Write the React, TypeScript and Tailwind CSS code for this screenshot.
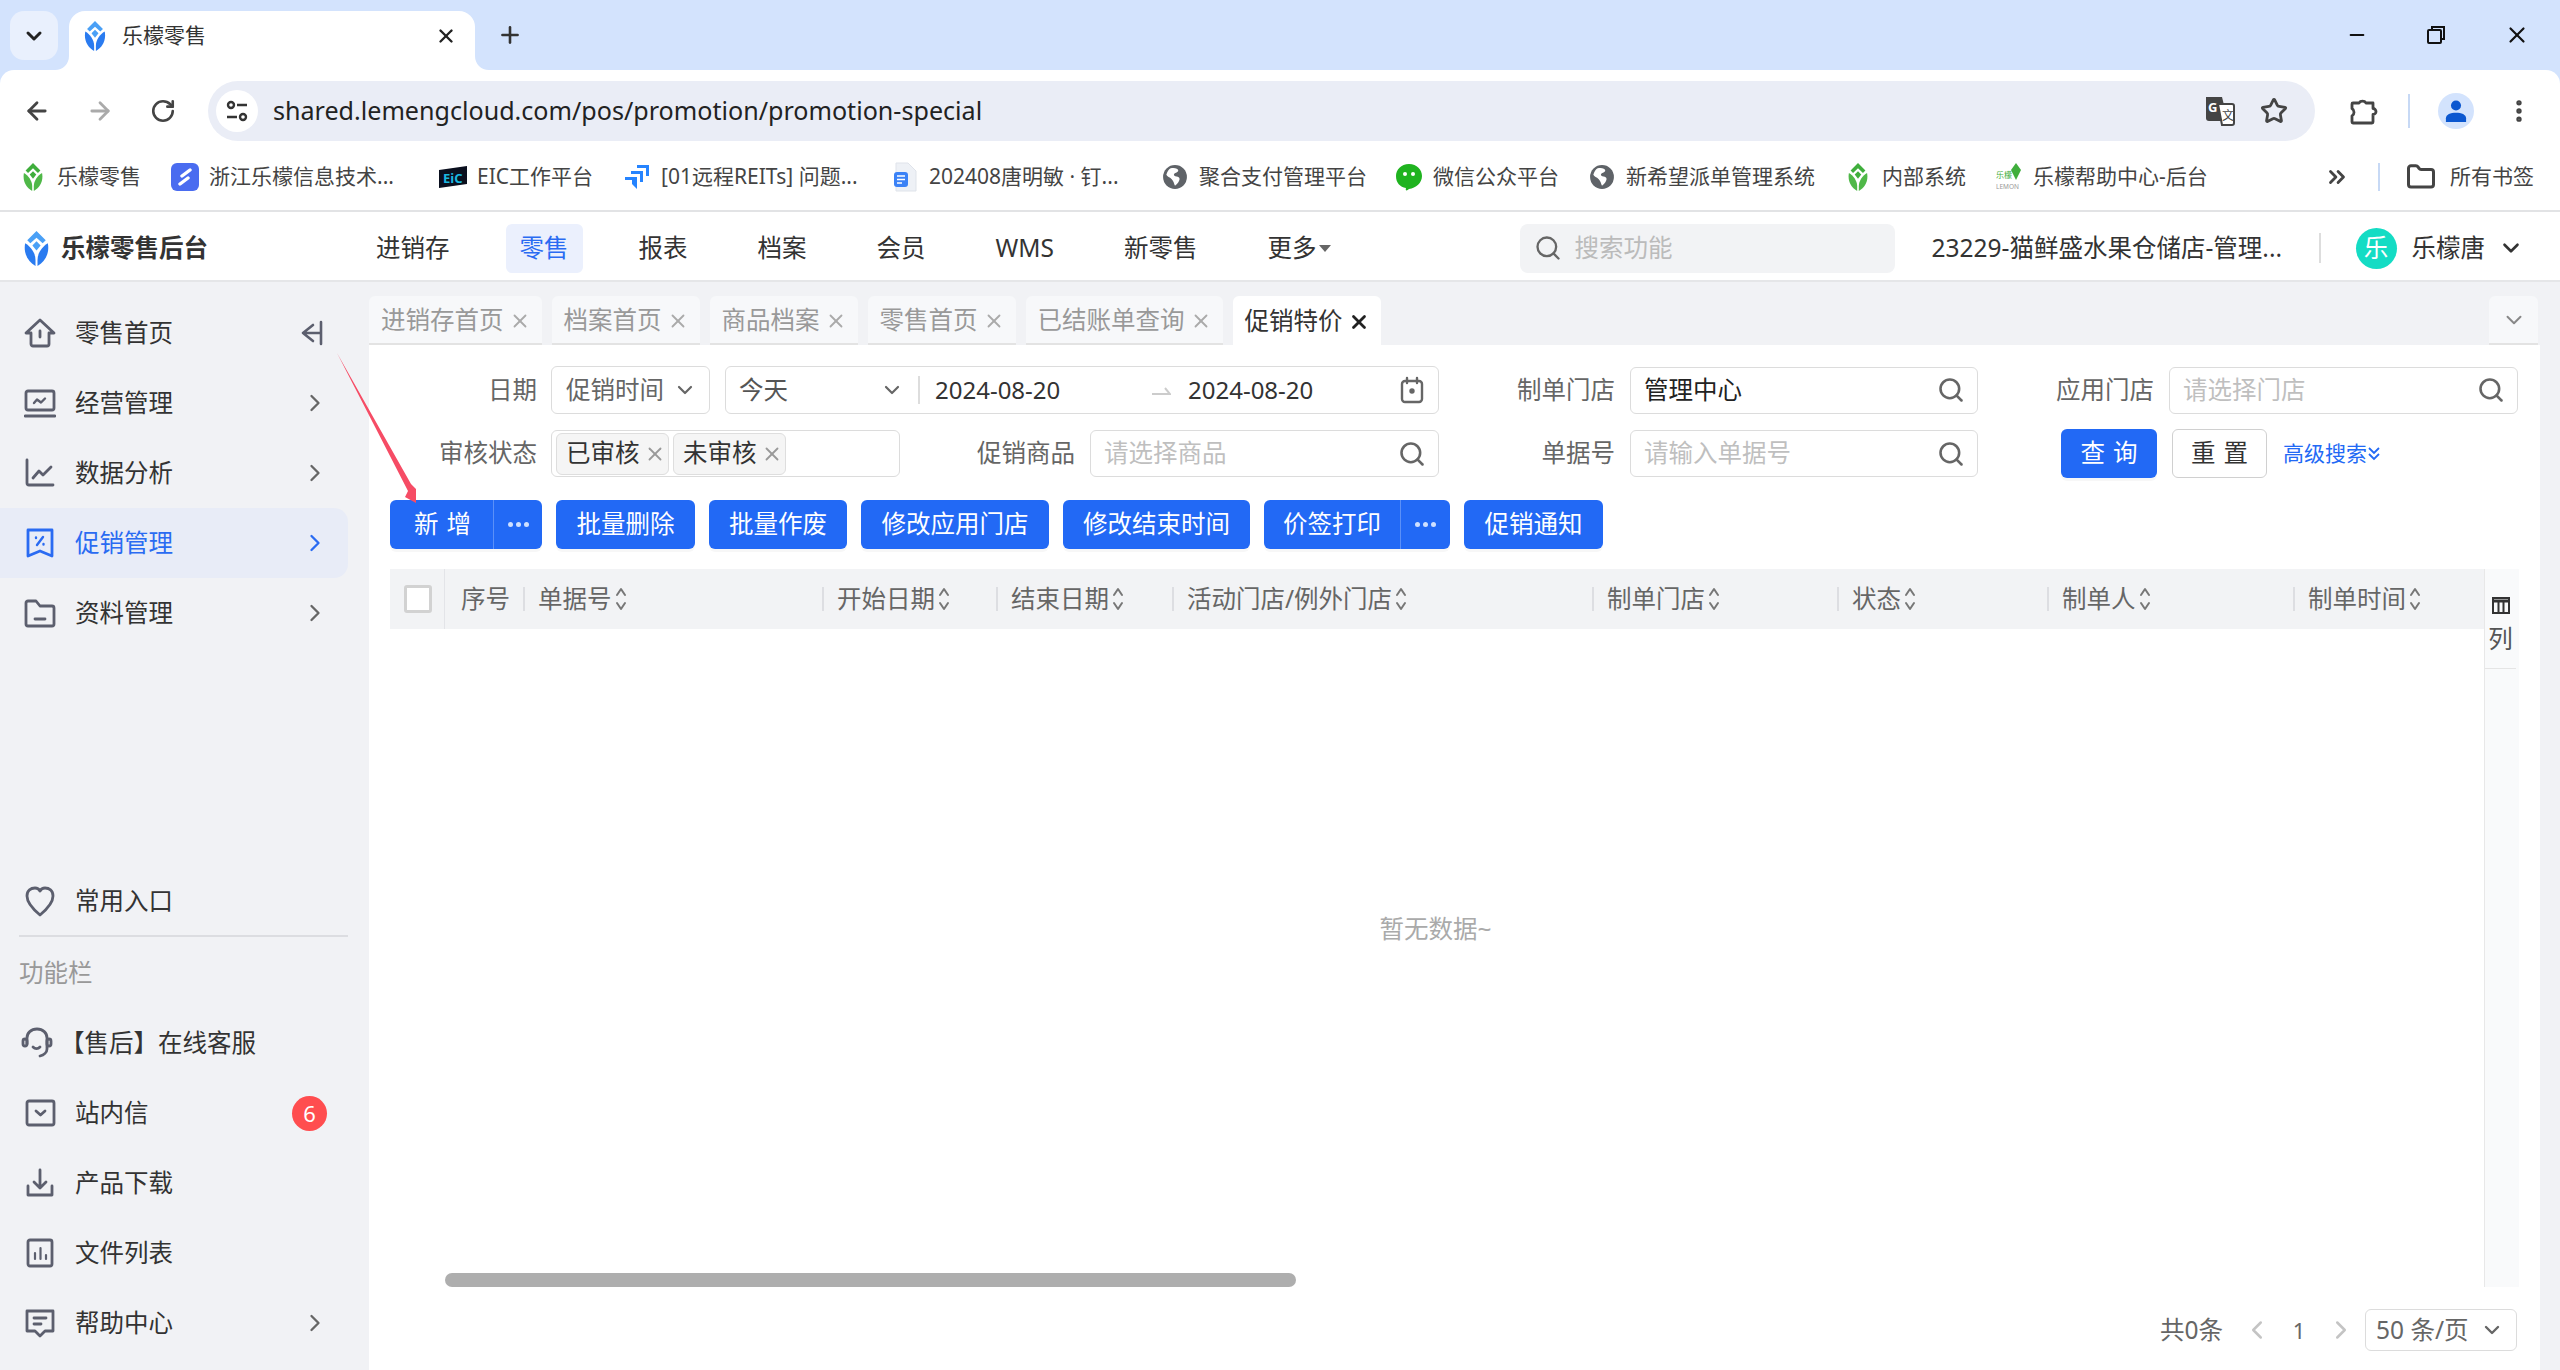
import { ArrowLeft, ArrowRight, ChevronDown, ChevronRight, ChevronLeft, ChevronsRight, EllipsisVertical, Folder, Plus, RotateCw, Search, Star, X, Minus } from 'lucide-react';
import type { ReactNode } from 'react';

const Leaf = ({ top, low, w = 20, h = 28 }: { top: string; low: string; w?: number; h?: number }) => (
	<svg width={w} height={h} viewBox="0 0 24 34" className="shrink-0">
		<path fill={top} d="M12 0L21 9L18 12L12 6.500L6 12L3 9Z" />
		<path fill={top} d="M12 10L16 14L12 19L8 14Z" />
		<path fill={low} d="M1 12C6 15 11 21 11 28V34C4 30 -1 22 1 12Z" />
		<path fill={low} d="M23 12C18 15 13 21 13 28V34C20 30 25 22 23 12Z" />
	</svg>
);

const Globe = () => (
	<svg width="26" height="26" viewBox="0 0 24 24" className="shrink-0">
		<circle cx="12" cy="12" r="11" fill="#5f6368" />
		<path fill="#fff" d="M8 4C11 3 15 4 15 6C15 8 11 8 11 10C11 12 15 11 16 13C17 15 14 19 12 20C11 18 11 16 9 14C7 12 5 12 4 10C5 7 6 5 8 4Z" />
	</svg>
);

const Bookmark = ({ icon, text, width }: { icon: ReactNode; text: string; width: number }) => (
	<div className="flex items-center shrink-0" style={{ width }}>
		<span className="w-[24px] flex justify-center shrink-0">{icon}</span>
		<span className="ml-[12px] text-[21px] text-[#444] whitespace-nowrap">{text}</span>
	</div>
);

const I = ({ children, s = 32 }: { children: ReactNode; s?: number }) => (
	<svg width={s} height={s} viewBox="0 0 32 32" fill="none" stroke="#5c5f6e" strokeWidth="2.8" strokeLinecap="round" strokeLinejoin="round" className="shrink-0">
		{children}
	</svg>
);

const icons: Record<string, ReactNode> = {
	home: <I><path d="M2 16L16 3L30 16H25V27a2 2 0 0 1-2 2H9a2 2 0 0 1-2-2V16Z" /><path d="M16 14V20" /></I>,
	biz: <I><rect x="2" y="4" width="28" height="19" rx="2" /><path d="M1 29H31" /><path d="M10 16L13 12.500L17 15.500L21 11.500" strokeWidth="2.400" /></I>,
	chart: <I><path d="M3 3V26a2 2 0 0 0 2 2H29" /><path d="M9 21L15 14L19 18L27 10" /></I>,
	promo: <svg width="32" height="32" viewBox="0 0 32 32" fill="none" stroke="#2a6bf2" strokeWidth="2.8" strokeLinecap="round" strokeLinejoin="round" className="shrink-0"><path d="M4 3H28V29L16 24L4 29Z" /><path d="M19 10L13 18M12 10.500V11M19.500 17V17.500" strokeWidth="2.400" /></svg>,
	folder: <I><path d="M2 6a2 2 0 0 1 2-2H12L16 9H28a2 2 0 0 1 2 2V27a2 2 0 0 1-2 2H4a2 2 0 0 1-2-2Z" /><path d="M11 22H21" /></I>,
	heart: <I><path d="M16 30C10 25 3 18 3 11C3 5 7 3 11 3C13 3 15 4 16 6C17 4 19 3 21 3C25 3 29 5 29 11C29 18 22 25 16 30Z" /></I>,
	headset: <I><path d="M6 17V11C6 6 10 2 16 2C22 2 26 6 26 11V22C26 25 23 28 19 29" /><rect x="2" y="12" width="4" height="7" rx="2" /><rect x="26" y="12" width="4" height="7" rx="2" /><path d="M12 20C14 22 17 22 19 20" /></I>,
	mail: <I><rect x="3" y="4" width="27" height="24" rx="2" /><path d="M12 14L16.500 18L21 14" /></I>,
	download: <I><path d="M16 3V21M10 15L16 21L22 15" /><path d="M4 19V28H28V19" /></I>,
	file: <I><rect x="4" y="3" width="24" height="26" rx="2" /><path d="M11 22V16M16.500 22V11M22 22V18" strokeWidth="2.200" /></I>,
	help: <I><path d="M3 4H29V24H21L16 29L11 24H3Z" /><path d="M10 11H22M10 17H17" /></I>,
};

const SideRow = ({ icon, text, arrow, active, badge }: { icon: string; text: string; arrow?: boolean; active?: boolean; badge?: string }) => (
	<div className={`flex items-center h-[70px] w-[348px] pl-[24px] rounded-r-[14px] ${active ? 'bg-[#e8ecf7] text-[#2a6bf2]' : 'text-[#333]'}`}>
		<span className="w-[32px] flex justify-center">{icons[icon]}</span>
		<span className="ml-[19px] text-[24.5px]">{text}</span>
		{arrow && <ChevronRight size={28} strokeWidth={2} className={`ml-auto mr-[19px] ${active ? 'text-[#2a6bf2]' : 'text-[#666]'}`} />}
		{badge && <span className="ml-auto mr-[21px] w-[35px] h-[35px] rounded-full bg-[#ff4d4f] text-white text-[22px] flex items-center justify-center">{badge}</span>}
	</div>
);

const Sidebar = () => (
	<aside className="w-[369px] shrink-0 flex flex-col pt-[16px] pb-[12px]">
		<div className="flex items-center h-[70px] w-[348px] pl-[24px] text-[#333]">
			<span className="w-[32px] flex justify-center">{icons.home}</span>
			<span className="ml-[19px] text-[24.5px]">零售首页</span>
			<svg width="24" height="28" viewBox="0 0 24 28" fill="none" stroke="#5c5f6e" strokeWidth="2.600" strokeLinecap="round" strokeLinejoin="round" className="ml-auto mr-[24px]"><path d="M21 3V25M13 6L3 14L13 22M3 14H21" /></svg>
		</div>
		<SideRow icon="biz" text="经营管理" arrow />
		<SideRow icon="chart" text="数据分析" arrow />
		<SideRow icon="promo" text="促销管理" arrow active />
		<SideRow icon="folder" text="资料管理" arrow />
		<div className="mt-auto" />
		<SideRow icon="heart" text="常用入口" />
		<div className="h-[2px] w-[329px] ml-[19px] bg-[#dcdde1] -mt-[1px] mb-[1px]" />
		<div className="h-[70px] flex items-center pl-[19px] text-[24.5px] text-[#999]">功能栏</div>
		<div className="flex items-center h-[70px] pl-[21px] text-[#333]">
			<span className="w-[32px]">{icons.headset}</span>
			<span className="ml-[7px] text-[24.5px]">【售后】在线客服</span>
		</div>
		<SideRow icon="mail" text="站内信" badge="6" />
		<SideRow icon="download" text="产品下载" />
		<SideRow icon="file" text="文件列表" />
		<SideRow icon="help" text="帮助中心" arrow />
	</aside>
);

const SortIcon = () => (
	<svg width="12" height="26" viewBox="0 0 12 26" fill="none" stroke="#777" strokeWidth="2" strokeLinecap="round" strokeLinejoin="round" className="ml-[3px] shrink-0">
		<path d="M2 9L6 3L10 9M2 17L6 23L10 17" />
	</svg>
);

const Field = ({ label, labelW, w, text, placeholder }: { label: string; labelW: number; w: number; text?: string; placeholder?: string }) => (
	<>
		<span className="text-[24.5px] text-[#666] text-right shrink-0" style={{ width: labelW }}>{label}</span>
		<div className="ml-[15px] h-[47px] shrink-0 flex items-center justify-between border-[1.5px] border-[#dcdcdc] rounded-[6px] pl-[13px] pr-[12px]" style={{ width: w }}>
			<span className={`text-[24.5px] ${text ? 'text-[#222]' : 'text-[#bfbfbf]'}`}>{text ?? placeholder}</span>
			<Search size={28} strokeWidth={2.2} className="text-[#666]" />
		</div>
	</>
);

const Tab = ({ text, active }: { text: string; active?: boolean }) => (
	<div className={`h-[49px] flex items-center gap-[5px] pl-[12px] pr-[11px] pt-[2px] rounded-t-[6px] ${active ? 'bg-white text-[#333]' : 'bg-[#f7f8fa] text-[#999] border-b-[2px] border-[#e3e3e3]'}`}>
		<span className="text-[24.5px]">{text}</span>
		<X size={22} strokeWidth={active ? 3 : 2} className={active ? 'text-[#222]' : 'text-[#aaa]'} />
	</div>
);

const Btn = ({ text, w }: { text: string; w: number }) => (
	<div className="h-[49px] shrink-0 rounded-[6px] bg-[#2269f5] text-white text-[24.5px] flex items-center justify-center shadow-[0_3px_0_rgba(0,0,0,0.03)]" style={{ width: w }}>{text}</div>
);

const SplitBtn = ({ text, w, right, wide }: { text: string; w: number; right: number; wide?: boolean }) => (
	<div className="h-[49px] shrink-0 rounded-[6px] bg-[#2269f5] text-white text-[24.5px] flex items-stretch shadow-[0_3px_0_rgba(0,0,0,0.03)]">
		<span className={`flex items-center justify-center ${wide ? 'tracking-[8px] pl-[10px]' : ''}`} style={{ width: w }}>{text}</span>
		<span className="flex items-center justify-center border-l border-[#5b90f8]" style={{ width: right }}>
			<span className="flex gap-[3px]"><i className="w-[5px] h-[5px] rounded-full bg-[#cfe0ff]" /><i className="w-[5px] h-[5px] rounded-full bg-[#cfe0ff]" /><i className="w-[5px] h-[5px] rounded-full bg-[#cfe0ff]" /></span>
		</span>
	</div>
);

const columns = [
	{ text: '序号', w: 78, sort: false },
	{ text: '单据号', w: 299, sort: true },
	{ text: '开始日期', w: 174, sort: true },
	{ text: '结束日期', w: 176, sort: true },
	{ text: '活动门店/例外门店', w: 420, sort: true },
	{ text: '制单门店', w: 245, sort: true },
	{ text: '状态', w: 210, sort: true },
	{ text: '制单人', w: 246, sort: true },
	{ text: '制单时间', w: 191, sort: true },
];

const Content = () => (
	<div className="flex-1 bg-white flex flex-col pt-[21px]">
		{/* filters */}
		<div className="flex items-center h-[48px]">
			<span className="w-[168px] text-right text-[24.5px] text-[#666]">日期</span>
			<div className="ml-[14px] w-[159px] h-[48px] border-[1.5px] border-[#dcdcdc] rounded-[6px] flex items-center justify-between pl-[14px] pr-[12px]">
				<span className="text-[24.5px] text-[#666]">促销时间</span>
				<ChevronDown size={24} strokeWidth={2.2} className="text-[#666]" />
			</div>
			<div className="ml-[15px] w-[714px] h-[48px] border-[1.5px] border-[#dcdcdc] rounded-[6px] flex items-center">
				<div className="w-[192px] flex items-center justify-between pl-[13px] pr-[14px]">
					<span className="text-[24.5px] text-[#555]">今天</span>
					<ChevronDown size={24} strokeWidth={2.2} className="text-[#666]" />
				</div>
				<i className="w-[2px] h-[28px] bg-[#ddd]" />
				<span className="ml-[15px] w-[216px] text-[24px] text-[#333]">2024-08-20</span>
				<svg width="20" height="12" viewBox="0 0 20 12" fill="none" stroke="#ccc" strokeWidth="2"><path d="M1 10H19L14 4" /></svg>
				<span className="ml-[17px] w-[212px] text-[24px] text-[#333]">2024-08-20</span>
				<svg width="24" height="28" viewBox="0 0 24 28" fill="none" stroke="#666" strokeWidth="2.400" strokeLinecap="round"><rect x="2" y="5" width="20" height="21" rx="3" /><path d="M7 2V7M17 2V7" /><circle cx="12" cy="15" r="1.500" fill="#666" /></svg>
			</div>
			<Field label="制单门店" labelW={176} w={348} text="管理中心" />
			<Field label="应用门店" labelW={176} w={349} placeholder="请选择门店" />
		</div>
		<div className="flex items-center h-[49px] mt-[15px]">
			<span className="w-[168px] text-right text-[24.5px] text-[#666]">审核状态</span>
			<div className="ml-[14px] w-[349px] h-[47px] border-[1.5px] border-[#dcdcdc] rounded-[6px] flex items-center pl-[4px] gap-[4px]">
				{['已审核', '未审核'].map((t) => (
					<span key={t} className="w-[113px] h-[42px] rounded-[6px] border border-[#dedede] bg-[#f5f5f5] flex items-center justify-between pl-[9px] pr-[2px]">
						<span className="text-[24.5px] text-[#333] whitespace-nowrap">{t}</span>
						<X size={22} strokeWidth={2} className="text-[#999]" />
					</span>
				))}
			</div>
			<Field label="促销商品" labelW={175} w={349} placeholder="请选择商品" />
			<Field label="单据号" labelW={176} w={348} placeholder="请输入单据号" />
			<div className="ml-[83px] w-[96px] h-[49px] rounded-[6px] bg-[#2269f5] text-white text-[24.5px] tracking-[8px] pl-[8px] flex items-center justify-center shadow-[0_3px_0_rgba(0,0,0,0.03)]">查询</div>
			<div className="ml-[15px] w-[95px] h-[49px] rounded-[6px] border-[1.5px] border-[#d0d0d0] text-[#333] text-[24.5px] tracking-[8px] pl-[8px] flex items-center justify-center">重置</div>
			<span className="ml-[16px] text-[21px] text-[#2269f5]">高级搜索</span>
			<svg width="14" height="18" viewBox="0 0 14 18" fill="none" stroke="#2269f5" strokeWidth="1.800"><path d="M2 3L7 8L12 3M2 9L7 14L12 9" /></svg>
		</div>
		{/* actions */}
		<div className="flex items-center h-[49px] mt-[22px] pl-[21px] gap-[14px]">
			<SplitBtn text="新增" w={103} right={49} wide />
			<Btn text="批量删除" w={139} />
			<Btn text="批量作废" w={138} />
			<Btn text="修改应用门店" w={188} />
			<Btn text="修改结束时间" w={187} />
			<SplitBtn text="价签打印" w={136} right={50} />
			<Btn text="促销通知" w={139} />
		</div>
		{/* table */}
		<div className="flex mt-[20px] h-[718px] pl-[21px] pr-[21px]">
			<div className="flex-1 flex flex-col">
				<div className="h-[60px] flex bg-[#f2f3f5]">
					<div className="w-[55px] shrink-0 flex items-center pl-[14px] border-r-[1.5px] border-[#e3e4e8]">
						<i className="w-[28px] h-[28px] bg-white border-[3px] border-[#d2d2d2] rounded-[3px]" />
					</div>
					{columns.map((c, i) => (
						<div key={c.text} className="shrink-0 flex items-center" style={{ width: c.w }}>
							{i > 0 && <i className="w-[2px] h-[24px] bg-[#dddee2]" />}
							<span className={`text-[24.5px] text-[#666] whitespace-nowrap ${i > 0 ? 'ml-[13px]' : 'ml-[16px]'}`}>{c.text}</span>
							{c.sort && <SortIcon />}
						</div>
					))}
				</div>
				<div className="flex-1 flex items-center justify-center pb-[44px] pr-[3px] text-[24.5px] text-[#aaa]">暂无数据~</div>
				<div className="h-[14px] w-[851px] ml-[55px] rounded-full bg-[#aeaeae]" />
			</div>
			<div className="w-[35px] shrink-0 bg-[#f9fafb] border-l border-[#e8e8e8] flex flex-col items-center pr-[3px]">
				<svg width="18" height="17" viewBox="0 0 18 17" className="mt-[28px] shrink-0" fill="none" stroke="#333" strokeWidth="2"><rect x="1" y="1" width="16" height="15" /><path d="M1 4H17" strokeWidth="3" /><path d="M6.500 4V16M11.500 4V16" /></svg>
				<span className="mt-[5px] text-[24.5px] text-[#555] leading-[40px]">列</span>
				<i className="w-full h-[1px] bg-[#e5e5e5] mt-[9px]" />
			</div>
		</div>
		{/* pagination */}
		<div className="flex items-center justify-end h-[42px] mt-[22px] pr-[23px]">
			<span className="text-[24.5px] text-[#666]">共0条</span>
			<ChevronLeft size={30} strokeWidth={2} className="ml-[19px] text-[#c4c4c4]" />
			<span className="w-[54px] text-center text-[22px] text-[#666]">1</span>
			<ChevronRight size={30} strokeWidth={2} className="text-[#c4c4c4]" />
			<div className="ml-[9px] w-[152px] h-[42px] border-[1.5px] border-[#dcdcdc] rounded-[6px] flex items-center justify-between pl-[10px] pr-[12px]">
				<span className="text-[24.5px] text-[#666] whitespace-nowrap">50 条/页</span>
				<ChevronDown size={24} strokeWidth={2.4} className="text-[#666]" />
			</div>
		</div>
	</div>
);

const App = () => (
	<div className="relative w-[2560px] h-[1370px] overflow-hidden flex flex-col bg-[#f1f2f5] font-['Noto_Sans','Noto_Sans_CJK_SC',sans-serif]">
		{/* browser chrome */}
		<div className="bg-[#d3e3fd] shrink-0">
			<div className="h-[70px] flex items-start pl-[10px]">
				<div className="mt-[11px] w-[48px] h-[49px] rounded-[14px] bg-[#e9f0fd] flex items-center justify-center">
					<ChevronDown size={24} strokeWidth={3} className="text-[#222]" />
				</div>
				<div className="relative mt-[11px] ml-[11px] w-[406px] h-[59px] pb-[9px] bg-white rounded-t-[16px] flex items-center pl-[15px]">
					<svg width="14" height="14" viewBox="0 0 14 14" className="absolute -left-[14px] bottom-0"><path fill="#fff" d="M14 0V14H0C8 14 14 8 14 0Z" /></svg>
					<svg width="14" height="14" viewBox="0 0 14 14" className="absolute -right-[14px] bottom-0"><path fill="#fff" d="M0 0V14H14C6 14 0 8 0 0Z" /></svg>
					<Leaf top="#4aa0f6" low="#2a7bf0" w={22} h={30} />
					<span className="ml-[16px] text-[21px] text-[#333]">乐檬零售</span>
					<X size={22} strokeWidth={2.6} className="ml-auto mr-[18px] text-[#222]" />
				</div>
				<Plus size={26} strokeWidth={2.4} className="mt-[22px] ml-[22px] text-[#333]" />
				<div className="ml-auto flex items-center mt-[22px] pr-[30px]">
					<Minus size={22} strokeWidth={2} className="text-[#111]" />
					<svg width="20" height="20" viewBox="0 0 20 20" fill="none" stroke="#111" strokeWidth="2" className="ml-[58px]"><rect x="2" y="5" width="13" height="13" rx="1" /><path d="M6 5V2H18V14H15" /></svg>
					<X size={26} strokeWidth={2} className="ml-[58px] text-[#111]" />
				</div>
			</div>
			<div className="bg-white rounded-t-[14px]">
				<div className="h-[81px] flex items-center pl-[23px]">
					<ArrowLeft size={28} strokeWidth={2.4} className="text-[#444]" />
					<ArrowRight size={28} strokeWidth={2.4} className="ml-[35px] text-[#aaa]" />
					<RotateCw size={26} strokeWidth={2.4} className="ml-[36px] text-[#444]" />
					<div className="ml-[32px] w-[2107px] h-[60px] rounded-full bg-[#eaedf6] flex items-center pl-[8px]">
						<span className="w-[42px] h-[42px] rounded-full bg-white flex items-center justify-center">
							<svg width="24" height="24" viewBox="0 0 24 24" fill="none" stroke="#333" strokeWidth="2.400"><circle cx="6" cy="6" r="3" /><path d="M12 6H22M2 18H12" /><circle cx="18" cy="18" r="3" /></svg>
						</span>
						<span className="ml-[15px] text-[25.1px] text-[#222] whitespace-nowrap">shared.lemengcloud.com/pos/promotion/promotion-special</span>
						<svg width="30" height="30" viewBox="0 0 30 30" className="ml-auto shrink-0">
							<path fill="#444" d="M1 1H17L23 25H4a3 3 0 0 1-3-3Z" />
							<path fill="#fff" stroke="#444" strokeWidth="2" d="M13 8H27a2 2 0 0 1 2 2V27a2 2 0 0 1-2 2H17Z" />
							<text x="3" y="16" fill="#fff" fontSize="13" fontWeight="700">G</text>
							<text x="17" y="24" fill="#444" fontSize="12">文</text>
						</svg>
						<Star size={28} strokeWidth={2.4} className="ml-[25px] mr-[27px] text-[#444]" />
					</div>
					<svg width="30" height="30" viewBox="0 0 30 30" fill="none" stroke="#444" strokeWidth="2.800" strokeLinejoin="round" className="ml-[33px] shrink-0"><path d="M5 7H11a4 3.500 0 0 1 7 0H25V12.500a3 3 0 0 1 0 6V26a1 1 0 0 1-1 1H5a1 1 0 0 1-1-1V20a4.500 4.500 0 0 0 0-7.500V8a1 1 0 0 1 1-1Z" /></svg>
					<i className="ml-[30px] w-[2px] h-[34px] bg-[#c7d9f5]" />
					<span className="ml-[28px] w-[36px] h-[36px] rounded-full bg-[#d3e3fd] flex items-center justify-center">
						<svg width="22" height="22" viewBox="0 0 24 24" fill="#0b57d0"><circle cx="12" cy="6" r="5.500" /><path d="M1 24V20C1 16 6 14 12 14C18 14 23 16 23 20V24Z" /></svg>
					</span>
					<EllipsisVertical size={28} strokeWidth={2.6} className="ml-[31px] text-[#444]" />
				</div>
				<div className="h-[61px] flex items-center pl-[21px] pb-[8px] border-b-[2px] border-[#e2e3e5]">
					<Bookmark width={152} icon={<Leaf top="#3fae3c" low="#4fb848" />} text="乐檬零售" />
					<Bookmark width={268} icon={<span className="w-[28px] h-[28px] shrink-0 rounded-[6px] bg-[#4a6cf0] flex items-center justify-center"><svg width="16" height="18" viewBox="0 0 16 18" fill="none" stroke="#fff" strokeWidth="3.400" strokeLinecap="round"><path d="M13 2L5 8M11 10L3 16" /></svg></span>} text="浙江乐檬信息技术..." />
					<Bookmark width={184} icon={<svg width="28" height="24" viewBox="0 0 28 24" className="shrink-0"><path fill="#0a0f1e" d="M0 5L28 1V19L0 23Z" /><text x="4" y="18" fill="#1bb8e0" fontSize="13" fontWeight="700">EiC</text></svg>} text="EIC工作平台" />
					<Bookmark width={268} icon={<svg width="26" height="26" viewBox="0 0 26 26" fill="#2684ff" className="shrink-0"><path d="M13 1H25V12H22V4H13Z" /><path d="M7 7H19V18H16V10H7Z" /><path d="M1 13H13V25L8 20V16H1Z" /></svg>} text="[01远程REITs] 问题..." />
					<Bookmark width={270} icon={<svg width="24" height="30" viewBox="0 0 24 30" className="shrink-0"><path fill="#eef1f6" stroke="#dfe3ea" d="M3 1H15L23 9V29H3Z" /><rect x="1" y="10" width="14" height="15" rx="3" fill="#3b82f6" /><path stroke="#fff" strokeWidth="1.500" d="M4 14H12M4 17.500H12M4 21H9" /></svg>} text="202408唐明敏 · 钉..." />
					<Bookmark width={234} icon={<Globe />} text="聚合支付管理平台" />
					<Bookmark width={193} icon={<svg width="28" height="28" viewBox="0 0 28 28" className="shrink-0"><path fill="#1fb31f" d="M14 1C22 1 27 7 27 13C27 20 21 25 14 26C12 28 10 28 11 25C5 24 1 20 1 13C1 7 6 1 14 1Z" /><circle cx="10" cy="11" r="2" fill="#fff" /><circle cx="18" cy="11" r="2" fill="#fff" /></svg>} text="微信公众平台" />
					<Bookmark width={256} icon={<Globe />} text="新希望派单管理系统" />
					<Bookmark width={151} icon={<Leaf top="#3fae3c" low="#4fb848" />} text="内部系统" />
					<Bookmark width={300} icon={<svg width="26" height="28" viewBox="0 0 26 28" className="shrink-0"><text x="0" y="15" fill="#3fae3c" fontSize="8">乐檬</text><path fill="#3fae3c" d="M20 0L25 7L20 17L15 7Z" /><text x="0" y="26" fill="#999" fontSize="6.500">LEMON</text></svg>} text="乐檬帮助中心-后台" />
					<ChevronsRight size={26} strokeWidth={2.6} className="ml-[27px] text-[#444]" />
					<i className="ml-[28px] w-[2px] h-[28px] bg-[#c7d9f5]" />
					<Folder size={30} strokeWidth={2.4} className="ml-[26px] text-[#444]" />
					<span className="ml-[14px] text-[21px] text-[#444] whitespace-nowrap">所有书签</span>
				</div>
			</div>
		</div>
		{/* app header */}
		<div className="shrink-0 h-[70px] bg-white border-b-[2px] border-[#e5e6e8] flex items-center pt-[4px] pl-[24px] pr-[36px]">
			<div className="w-[338px] flex items-center shrink-0">
				<Leaf top="#4aa0f6" low="#2a7bf0" w={25} h={35} />
				<span className="ml-[12px] text-[24.5px] font-bold text-[#333]">乐檬零售后台</span>
			</div>
			<nav className="flex shrink-0 gap-[42px] text-[24.5px] text-[#333]">
				{['进销存', '零售', '报表', '档案', '会员', 'WMS', '新零售'].map((t) => (
					<span key={t} className={`h-[49px] px-[14px] flex items-center rounded-[6px] ${t === '零售' ? 'bg-[#ebf0fd] text-[#2a6bf2]' : ''}`}>{t}</span>
				))}
				<span className="h-[49px] px-[14px] flex items-center">更多<i className="ml-[3px] border-x-[6px] border-x-transparent border-t-[7px] border-t-[#666]" /></span>
			</nav>
			<div className="ml-auto flex items-center shrink-0">
				<div className="w-[375px] h-[49px] bg-[#f2f3f5] rounded-[8px] flex items-center pl-[14px]">
					<Search size={28} strokeWidth={2} className="text-[#666]" />
					<span className="ml-[13px] text-[24.5px] text-[#bbb]">搜索功能</span>
				</div>
				<span className="ml-[37px] w-[347px] text-[24.5px] text-[#333] whitespace-nowrap">23229-猫鲜盛水果仓储店-管理...</span>
				<i className="ml-[40px] w-[2px] h-[30px] bg-[#ddd]" />
				<span className="ml-[35px] w-[41px] h-[41px] rounded-full bg-[#14dcc4] text-white text-[24.5px] flex items-center justify-center">乐</span>
				<span className="ml-[15px] text-[24.5px] text-[#333]">乐檬唐</span>
				<ChevronDown size={26} strokeWidth={2.4} className="ml-[13px] text-[#333]" />
			</div>
		</div>
		{/* body */}
		<div className="flex-1 min-h-0 flex">
			<Sidebar />
			<main className="flex-1 min-w-0 flex flex-col pr-[20px]">
				<div className="flex gap-[10px] pt-[14px] shrink-0">
					<Tab text="进销存首页" />
					<Tab text="档案首页" />
					<Tab text="商品档案" />
					<Tab text="零售首页" />
					<Tab text="已结账单查询" />
					<Tab text="促销特价" active />
					<div className="ml-auto mr-[2px] w-[49px] h-[49px] bg-[#f7f8fa] border-b-[2px] border-[#e3e3e3] rounded-t-[6px] flex items-center justify-center">
						<ChevronDown size={26} strokeWidth={1.8} className="text-[#888]" />
					</div>
				</div>
				<Content />
			</main>
		</div>
		{/* red annotation arrow */}
		<svg width="80" height="152" viewBox="0 0 80 152" className="absolute left-[337px] top-[353px]">
			<polygon points="0,0 74,131 79,136 79,150 68,144 71,138" fill="#f64c65" />
		</svg>
	</div>
);

export default App;
